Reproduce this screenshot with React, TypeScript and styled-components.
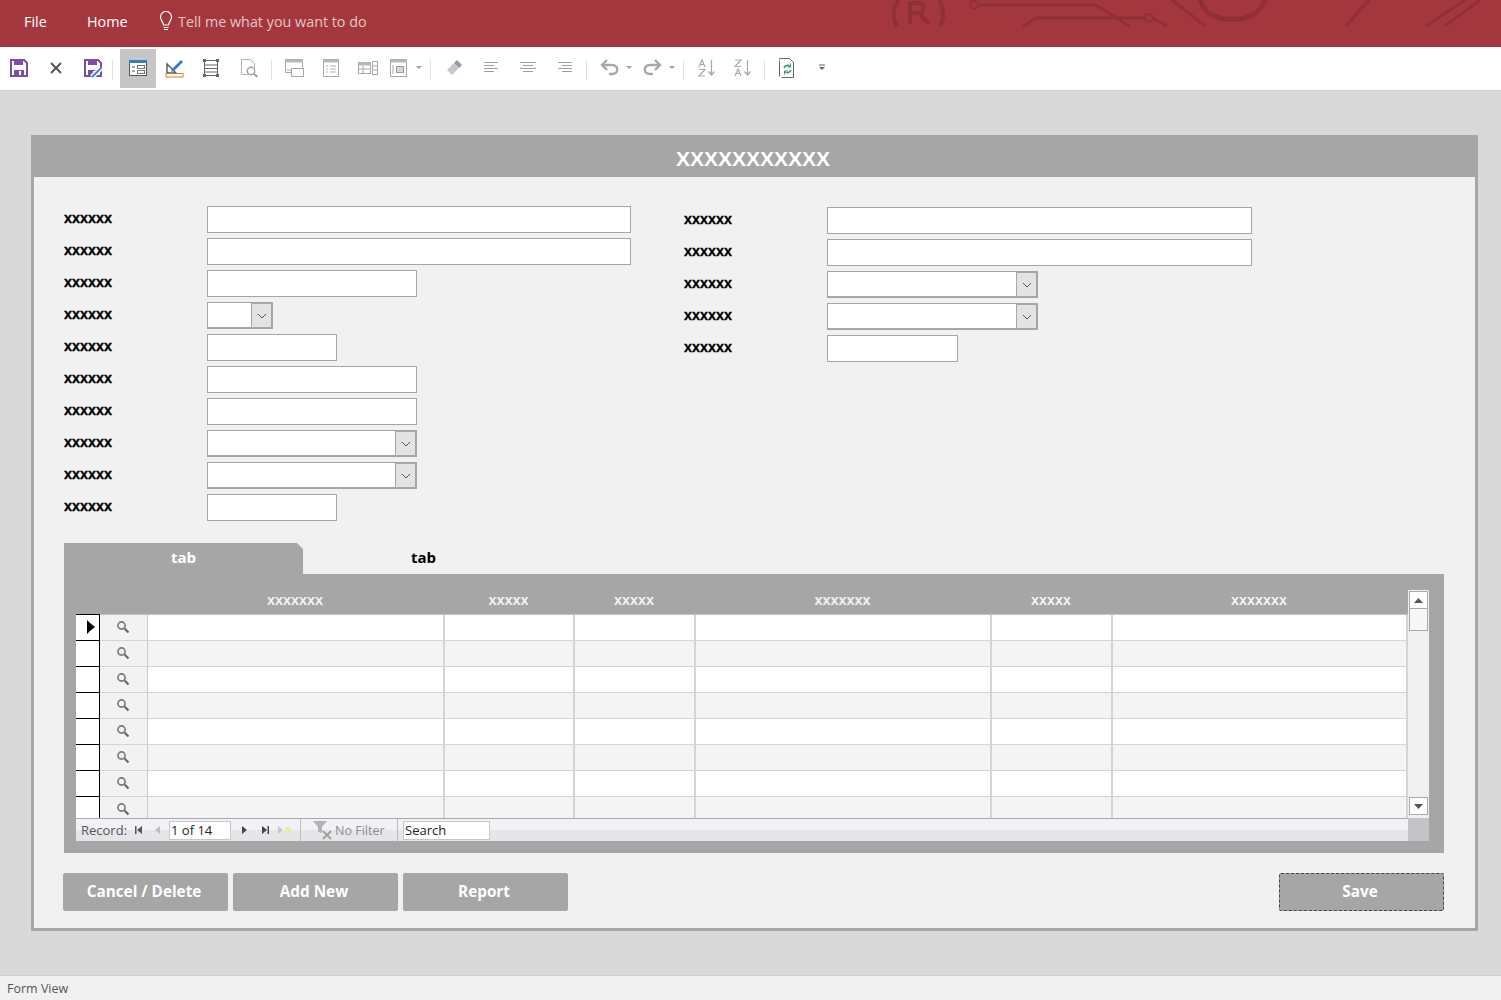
import React from "react";
import styled, { createGlobalStyle } from "styled-components";

const GlobalStyle = createGlobalStyle`
  html, body {
    margin: 0;
    padding: 0;
    background: #d9d9d9;
  }
  * {
    box-sizing: border-box;
  }
`;

const Page = styled.div`
  width: 1501px;
  height: 1000px;
  display: flex;
  flex-direction: column;
  overflow: hidden;
  font-family: "Open Sans", "Liberation Sans", sans-serif;
`;

const TitleBar = styled.div`
  position: relative;
  height: 47px;
  flex: none;
  display: flex;
  align-items: center;
  padding: 0 0 5px 24px;
  background: #a4373d;
  color: #fff;
  font-size: 14.35px;
  overflow: hidden;
`;

const Circuit = styled.svg`
  position: absolute;
  left: 860px;
  top: 0;
`;

const MenuItem = styled.span<{ $width: number }>`
  width: ${(p) => p.$width}px;
  flex: none;
`;

const TellMe = styled.span`
  display: flex;
  align-items: center;
  gap: 4px;
  color: #e3c6c8;
  margin-left: -2px;
`;

const Toolbar = styled.div`
  height: 44px;
  flex: none;
  display: flex;
  align-items: center;
  padding: 2px 0 0 0;
  background: #fff;
  border-bottom: 1px solid #d0d0d0;
`;

const ToolSlot = styled.div<{ $width: number; $active?: boolean }>`
  width: ${(p) => p.$width}px;
  height: 39px;
  flex: none;
  display: flex;
  align-items: center;
  justify-content: center;
  padding-bottom: 2px;
  margin-bottom: 2px;
  background: ${(p) => (p.$active ? "#c6c6c6" : "transparent")};
`;

const ToolSep = styled.div`
  width: 1px;
  height: 20px;
  flex: none;
  background: #e1e1e1;
`;

const Workspace = styled.div`
  flex: 1;
  padding: 44px 23px 44px 31px;
  background: #d9d9d9;
`;

const FormWindow = styled.div`
  height: 796px;
  display: flex;
  flex-direction: column;
  background: #f1f1f1;
  border: 3px solid #a6a6a6;
  border-top: 0;
`;

const FormHeader = styled.div`
  height: 42px;
  flex: none;
  margin: 0 -3px;
  display: flex;
  align-items: center;
  justify-content: center;
  padding: 5px 3px 0 0;
  background: #a6a6a6;
  color: #fff;
  font-family: "Liberation Sans", sans-serif;
  font-weight: 700;
  font-size: 21px;
`;

const FormBody = styled.div`
  flex: 1;
  display: flex;
  flex-direction: column;
  padding: 29px 31px 0 30px;
`;

const Fields = styled.div`
  height: 337px;
  flex: none;
  display: flex;
`;

const FieldColumn = styled.div<{ $width: number; $shift?: number }>`
  width: ${(p) => p.$width}px;
  flex: none;
  display: flex;
  flex-direction: column;
  gap: 5px;
  padding-top: ${(p) => p.$shift ?? 0}px;
`;

const FieldRow = styled.div`
  height: 27px;
  display: flex;
  align-items: center;
`;

const Label = styled.label`
  width: 143px;
  flex: none;
  color: #000;
  font-family: "Liberation Sans", sans-serif;
  font-weight: 700;
  font-size: 14.4px;
  -webkit-text-stroke: 0.3px #000;
  padding-bottom: 4px;
`;

const TextBox = styled.div<{ $width: number }>`
  width: ${(p) => p.$width}px;
  height: 27px;
  background: #fff;
  border: 1px solid #a6a6a6;
`;

const Combo = styled.div<{ $width: number }>`
  width: ${(p) => p.$width}px;
  height: 27px;
  display: flex;
  background: #fff;
  border: 1px solid #a6a6a6;
  border-right-width: 2px;
  border-bottom-width: 2px;
`;

const ComboValue = styled.div`
  flex: 1;
`;

const ComboButton = styled.div`
  width: 20px;
  flex: none;
  display: flex;
  align-items: center;
  justify-content: center;
  background: #e3e3e3;
  border-left: 1px solid #a6a6a6;
  border-top: 1px solid #a6a6a6;
`;

const TabStrip = styled.div`
  height: 31px;
  flex: none;
  display: flex;
`;

const Tab = styled.div<{ $active?: boolean }>`
  width: ${(p) => (p.$active ? 239 : 241)}px;
  display: flex;
  align-items: center;
  justify-content: center;
  padding-bottom: 3px;
  font-family: "Open Sans", sans-serif;
  font-weight: 700;
  font-size: 15px;
  color: ${(p) => (p.$active ? "#fff" : "#000")};
  background: ${(p) => (p.$active ? "#a6a6a6" : "transparent")};
  clip-path: ${(p) =>
    p.$active
      ? "polygon(0 0, calc(100% - 6px) 0, 100% 6px, 100% 100%, 0 100%)"
      : "none"};
`;

const TabPanel = styled.div`
  height: 279px;
  flex: none;
  display: flex;
  flex-direction: column;
  padding: 16px 15px 12px 12px;
  background: #a6a6a6;
`;

const GridWrap = styled.div`
  display: grid;
  grid-template-columns: 1332px 21px;
  grid-template-rows: 228px 23px;
  width: 1353px;
`;

const GridMain = styled.div`
  overflow: hidden;
`;

const GridHeader = styled.div`
  height: 25px;
  display: flex;
  border-bottom: 1px solid #c4c4c4;
`;

const HeadSpacer = styled.div`
  width: 72px;
  flex: none;
`;

const HeadCell = styled.div<{ $width: number }>`
  width: ${(p) => p.$width}px;
  flex: none;
  display: flex;
  align-items: center;
  justify-content: center;
  padding: 0 3px 5px 0;
  color: #f3f3f3;
  font-family: "Liberation Sans", sans-serif;
  font-weight: 700;
  font-size: 14.4px;
`;

const GridRow = styled.div<{ $odd: boolean }>`
  height: 26px;
  display: flex;
  background: ${(p) => (p.$odd ? "#f4f4f4" : "#fff")};
  border-bottom: 1px solid #d4d4d4;
`;

const Selector = styled.div<{ $first: boolean }>`
  width: 24px;
  flex: none;
  margin-top: ${(p) => (p.$first ? -1 : 0)}px;
  margin-bottom: -1px;
  display: flex;
  align-items: center;
  justify-content: flex-end;
  padding: 0 4px 2px 0;
  background: #fff;
  border-right: 1px solid #000;
  border-bottom: 1px solid #000;
  border-top: ${(p) => (p.$first ? "1px solid #000" : "0")};
`;

const LookupCell = styled.div`
  width: 48px;
  flex: none;
  display: flex;
  align-items: center;
  justify-content: center;
  padding: 0 2px 2px 0;
  background: #f2f2f2;
  border-right: 1px solid #c8c8c8;
`;

const DataCell = styled.div<{ $width: number }>`
  width: ${(p) => p.$width}px;
  flex: none;
  border-right: 2px solid #d4d4d4;
`;

const ScrollTrack = styled.div`
  grid-row: 1;
  grid-column: 2;
  display: flex;
  flex-direction: column;
  justify-content: space-between;
  padding: 1px 1px 3px;
  background: #f1f1f1;
`;

const ScrollTop = styled.div`
  display: flex;
  flex-direction: column;
`;

const ScrollButton = styled.div`
  height: 18px;
  display: flex;
  align-items: center;
  justify-content: center;
  background: #fff;
  border: 1px solid #a9a9a9;
`;

const ScrollThumb = styled.div`
  height: 22px;
  background: #f7f7f7;
  border: 1px solid #a9a9a9;
  border-top: 0;
`;

const NavBar = styled.div`
  grid-row: 2;
  grid-column: 1;
  display: flex;
  align-items: center;
  padding-left: 5px;
  font-size: 13px;
  color: #555;
  background: linear-gradient(#f2f2f6 0, #f2f2f6 50%, #e6e6ea 50%, #e6e6ea 100%);
  border-top: 1px solid #a9a9b0;
`;

const NavCorner = styled.div`
  grid-row: 2;
  grid-column: 2;
  background: #c3c3c8;
`;

const NavLabel = styled.span`
  width: 49px;
  flex: none;
`;

const NavIcon = styled.span<{ $width: number }>`
  width: ${(p) => p.$width}px;
  flex: none;
  display: flex;
  align-items: center;
  justify-content: center;
`;

const NavBox = styled.div<{ $width: number }>`
  width: ${(p) => p.$width}px;
  height: 19px;
  flex: none;
  display: flex;
  align-items: center;
  padding-left: 1px;
  color: #222;
  background: #fff;
  border: 1px solid #c8c8c8;
`;

const NavDivider = styled.div<{ $before: number; $after: number }>`
  width: 1px;
  height: 22px;
  flex: none;
  margin: 0 ${(p) => p.$after}px 0 ${(p) => p.$before}px;
  background: #bdbdc2;
`;

const NoFilter = styled.span`
  display: flex;
  align-items: center;
  width: 84px;
  flex: none;
  font-size: 12.5px;
  color: #8c8c8c;
`;

const Actions = styled.div`
  display: flex;
  gap: 5px;
  padding-top: 20px;
  margin-left: -1px;
`;

const ActionButton = styled.button<{ $focused?: boolean }>`
  width: 165px;
  height: 38px;
  padding: 0 3px 3px 0;
  display: flex;
  align-items: center;
  justify-content: center;
  font-family: "Open Sans", sans-serif;
  font-weight: 700;
  font-size: 15.3px;
  color: #fff;
  background: #a6a6a6;
  border: 1px ${(p) => (p.$focused ? "dashed #444" : "solid #a6a6a6")};
  border-radius: 2px;
  margin-left: ${(p) => (p.$focused ? "auto" : "0")};
`;

const StatusBar = styled.div`
  height: 25px;
  flex: none;
  display: flex;
  align-items: center;
  padding: 1px 0 0 7px;
  font-size: 12.5px;
  color: #555;
  background: #f1f1f1;
  border-top: 1px solid #cfcfcf;
`;

const Gl = ({ w, h, children }: { w: number; h: number; children: React.ReactNode }) => (
  <svg width={w} height={h} viewBox={`0 0 ${w} ${h}`} fill="none">
    {children}
  </svg>
);

const SaveIcon = ({ pen }: { pen?: boolean }) => (
  <Gl w={20} h={20}>
    <path d="M2 2h13l3 3v13H2z" fill="#fff" stroke="#7d4ea8" strokeWidth="2" />
    <rect x="5" y="2" width="9" height="5" fill="#7d4ea8" />
    <rect x="5" y="12" width="10" height="6" fill="#7d4ea8" />
    <rect x="10" y="13" width="2" height="4" fill="#fff" />
    {pen && <path d="M9 19l9-9" stroke="#fff" strokeWidth="5" />}
    {pen && <path d="M9 19l9-9" stroke="#3f86c9" strokeWidth="2" />}
  </Gl>
);

const GreyDoc = ({ children }: { children: React.ReactNode }) => (
  <Gl w={20} h={20}>
    <rect x="2.5" y="1.5" width="15" height="17" fill="#fff" stroke="#a8a8a8" />
    <rect x="2.5" y="1.5" width="15" height="3" fill="#b8b8b8" />
    {children}
  </Gl>
);

const AlignIcon = ({ lines }: { lines: [number, number][] }) => (
  <Gl w={18} h={14}>
    {lines.map(([a, b], i) => (
      <path key={i} d={`M${a} ${1.5 + i * 3}H${b}`} stroke="#a0a0a0" />
    ))}
  </Gl>
);

const SortIcon = ({ top, bottom }: { top: string; bottom: string }) => (
  <Gl w={20} h={20}>
    <path d={top} stroke="#a8a8a8" strokeWidth="1.2" />
    <path d={bottom} stroke="#a8a8a8" strokeWidth="1.2" />
    <path d="M14.5 2v15M11.5 13.5l3 3.5 3-3.5" stroke="#a8a8a8" strokeWidth="1.2" />
  </Gl>
);

const LETTER_A_TOP = "M2 9l3-7 3 7M3 6.5h4";
const LETTER_Z_BOTTOM = "M2 11.5h6l-6 6.5h6";
const LETTER_Z_TOP = "M2 2h6L2 8.5h6";
const LETTER_A_BOTTOM = "M2 18l3-7 3 7M3 15.5h4";

const SmallCaret = () => (
  <Gl w={6} h={4}>
    <path d="M0 0h6L3 3z" fill="#a0a0a0" />
  </Gl>
);

const Chevron = () => (
  <Gl w={10} h={6}>
    <path d="M1 1l4 4 4-4" stroke="#555" />
  </Gl>
);

const Lens = () => (
  <Gl w={14} h={14}>
    <circle cx="5.5" cy="5.5" r="3.6" stroke="#777" strokeWidth="1.6" />
    <path d="M8.5 8.5l4 4" stroke="#666" strokeWidth="2.2" />
  </Gl>
);

const Filled = ({ d, w, h, color }: { d: string; w: number; h: number; color: string }) => (
  <Gl w={w} h={h}>
    <path d={d} fill={color} />
  </Gl>
);

const columns = [297, 130, 121, 296, 121, 295];
const headers = ["xxxxxxx", "xxxxx", "xxxxx", "xxxxxxx", "xxxxx", "xxxxxxx"];
const rows = [0, 1, 2, 3, 4, 5, 6, 7];

type Field = { width: number; combo?: boolean };

const leftFields: Field[] = [
  { width: 424 },
  { width: 424 },
  { width: 210 },
  { width: 66, combo: true },
  { width: 130 },
  { width: 210 },
  { width: 210 },
  { width: 210, combo: true },
  { width: 210, combo: true },
  { width: 130 },
];

const rightFields: Field[] = [
  { width: 425 },
  { width: 425 },
  { width: 211, combo: true },
  { width: 211, combo: true },
  { width: 131 },
];

const renderField = (f: Field, i: number) => (
  <FieldRow key={i}>
    <Label>xxxxxx</Label>
    {f.combo ? (
      <Combo $width={f.width}>
        <ComboValue />
        <ComboButton>
          <Chevron />
        </ComboButton>
      </Combo>
    ) : (
      <TextBox $width={f.width} />
    )}
  </FieldRow>
);

const App = () => {
  return (
    <Page>
      <GlobalStyle />
      <TitleBar>
        <Circuit width="641" height="47" viewBox="0 0 641 47" fill="none" stroke="#8f3036" strokeWidth="3">
          <path d="M38 0c-5 8-6 18-1 26M79 0c5 8 6 18 1 26" strokeWidth="4" />
          <path d="M50 24V3h9c6 0 6 10 0 10h-9M59 13l10 11" strokeWidth="4" />
          <circle cx="114" cy="5" r="4" strokeWidth="2" />
          <path d="M118 5h118l34 22" />
          <path d="M163 27l12-9h110" />
          <circle cx="289" cy="18" r="4" strokeWidth="2" />
          <path d="M293 18l14 8" />
          <path d="M312 0l33 26" />
          <path d="M340 0c6 26 58 26 65 0" strokeWidth="5" />
          <path d="M509 0l-23 26M605 0l-39 26M620 0l-35 26" />
        </Circuit>
        <MenuItem $width={63}>File</MenuItem>
        <MenuItem $width={73}>Home</MenuItem>
        <TellMe>
          <Gl w={16} h={20}>
            <path
              d="M5.5 14c0-3-3-4-3-8a5.5 5.5 0 0 1 11 0c0 4-3 5-3 8z"
              stroke="#fff"
              strokeWidth="1.2"
            />
            <path d="M5.5 16.5h5M6 18.5h4" stroke="#fff" strokeWidth="1.2" />
          </Gl>
          Tell me what you want to do
        </TellMe>
      </TitleBar>

      <Toolbar>
        <ToolSlot $width={38}>
          <SaveIcon />
        </ToolSlot>
        <ToolSlot $width={36}>
          <Gl w={12} h={12}>
            <path d="M1 1l10 10M11 1L1 11" stroke="#555" strokeWidth="2" />
          </Gl>
        </ToolSlot>
        <ToolSlot $width={38}>
          <SaveIcon pen />
        </ToolSlot>
        <ToolSep />
        <ToolSlot $width={7} />
        <ToolSlot $width={36} $active>
          <Gl w={20} h={18}>
            <rect x="1.5" y="1.5" width="17" height="15" fill="#fff" stroke="#555" />
            <rect x="1" y="1" width="18" height="3" fill="#2f7fc4" />
            <path d="M4 8h3M4 12h3" stroke="#555" />
            <rect x="9.5" y="6.5" width="7" height="3" stroke="#777" />
            <rect x="9.5" y="11.5" width="7" height="3" stroke="#777" />
          </Gl>
        </ToolSlot>
        <ToolSlot $width={37}>
          <Gl w={20} h={20}>
            <path d="M2 15V6l9 9z" stroke="#555" strokeWidth="1.4" />
            <path d="M7 11l9-9 2 2-9 9-3 1z" fill="#2f7fc4" />
            <rect x="1" y="15.5" width="17" height="3.5" fill="#fff" stroke="#e07b1f" />
          </Gl>
        </ToolSlot>
        <ToolSlot $width={36}>
          <Gl w={18} h={20}>
            <rect x="2.5" y="2.5" width="13" height="15" stroke="#666" />
            <path d="M3 7h12M3 10.5h12M3 14h12" stroke="#666" />
            <path d="M1 1h3v3H1zM14 1h3v3h-3zM1 16h3v3H1zM14 16h3v3h-3z" fill="#666" />
          </Gl>
        </ToolSlot>
        <ToolSlot $width={39}>
          <Gl w={20} h={20}>
            <path d="M2.5 1.5h9l4 4v5M2.5 1.5v15h7" stroke="#b0b0b0" />
            <circle cx="12" cy="13" r="3.7" stroke="#a0a0a0" strokeWidth="1.4" />
            <path d="M15 16l3.5 3" stroke="#a0a0a0" strokeWidth="1.8" />
          </Gl>
        </ToolSlot>
        <ToolSlot $width={3} />
        <ToolSep />
        <ToolSlot $width={3} />
        <ToolSlot $width={37}>
          <Gl w={20} h={20}>
            <rect x="1.5" y="1.5" width="17" height="13" fill="#fff" stroke="#a8a8a8" />
            <rect x="1.5" y="1.5" width="17" height="3" fill="#b8b8b8" />
            <rect x="7.5" y="10.5" width="12" height="8" fill="#fff" stroke="#a8a8a8" />
            <path d="M3 12h4" stroke="#a8a8a8" />
          </Gl>
        </ToolSlot>
        <ToolSlot $width={37}>
          <GreyDoc>
            <path d="M5 8h2M9 8h6M5 11h2M9 11h6M5 14h2M9 14h6" stroke="#b0b0b0" />
          </GreyDoc>
        </ToolSlot>
        <ToolSlot $width={37}>
          <Gl w={20} h={14}>
            <rect x="0.5" y="1.5" width="12" height="11" fill="#fff" stroke="#a8a8a8" />
            <rect x="0.5" y="1.5" width="12" height="3" fill="#b8b8b8" />
            <path d="M0 8h12M5 5v7" stroke="#a8a8a8" />
            <rect x="14.5" y="0.5" width="5" height="13" stroke="#a8a8a8" />
            <path d="M15 5h4M15 9h4" stroke="#a8a8a8" />
          </Gl>
        </ToolSlot>
        <ToolSlot $width={26}>
          <Gl w={20} h={20}>
            <rect x="1.5" y="1.5" width="16" height="17" fill="#fff" stroke="#a8a8a8" />
            <rect x="1.5" y="1.5" width="16" height="3" fill="#b8b8b8" />
            <rect x="7.5" y="8.5" width="7" height="6" fill="#d8d8d8" stroke="#999" />
            <path d="M4 7v9" stroke="#a8a8a8" />
          </Gl>
        </ToolSlot>
        <ToolSlot $width={13}>
          <SmallCaret />
        </ToolSlot>
        <ToolSlot $width={5} />
        <ToolSep />
        <ToolSlot $width={4} />
        <ToolSlot $width={37}>
          <Gl w={20} h={18}>
            <path d="M3 11l7-7 5 5-7 7z" fill="#c9c4cf" />
            <path d="M10 4l3-3 5 5-3 3z" fill="#9a9a9a" />
          </Gl>
        </ToolSlot>
        <ToolSlot $width={37}>
          <AlignIcon lines={[[2, 16], [2, 12], [2, 16], [2, 12]]} />
        </ToolSlot>
        <ToolSlot $width={37}>
          <AlignIcon lines={[[1, 17], [4, 14], [1, 17], [4, 14]]} />
        </ToolSlot>
        <ToolSlot $width={37}>
          <AlignIcon lines={[[2, 16], [6, 16], [2, 16], [6, 16]]} />
        </ToolSlot>
        <ToolSlot $width={3} />
        <ToolSep />
        <ToolSlot $width={9} />
        <ToolSlot $width={28}>
          <Gl w={20} h={17}>
            <path d="M7 1L2 6l5 5" stroke="#a8a8a8" strokeWidth="2.4" />
            <path d="M3 6h9c7 0 7 9 0 9H9" stroke="#a8a8a8" strokeWidth="2.4" />
          </Gl>
        </ToolSlot>
        <ToolSlot $width={9}>
          <SmallCaret />
        </ToolSlot>
        <ToolSlot $width={5} />
        <ToolSlot $width={28}>
          <Gl w={20} h={17}>
            <path d="M13 1l5 5-5 5" stroke="#a8a8a8" strokeWidth="2.4" />
            <path d="M17 6H8c-7 0-7 9 0 9h3" stroke="#a8a8a8" strokeWidth="2.4" />
          </Gl>
        </ToolSlot>
        <ToolSlot $width={12}>
          <SmallCaret />
        </ToolSlot>
        <ToolSlot $width={5} />
        <ToolSep />
        <ToolSlot $width={4} />
        <ToolSlot $width={37}>
          <SortIcon top={LETTER_A_TOP} bottom={LETTER_Z_BOTTOM} />
        </ToolSlot>
        <ToolSlot $width={36}>
          <SortIcon top={LETTER_Z_TOP} bottom={LETTER_A_BOTTOM} />
        </ToolSlot>
        <ToolSlot $width={3} />
        <ToolSep />
        <ToolSlot $width={3} />
        <ToolSlot $width={37}>
          <Gl w={18} h={22}>
            <path d="M1.5 1.5v18" stroke="#666" />
            <path d="M1.5 1.5h10l4 4v15h-12" fill="#fff" stroke="#666" />
            <path d="M6 11a3.5 3.5 0 0 1 6-1.5M13 13a3.5 3.5 0 0 1-6 1.5" stroke="#3d9a76" strokeWidth="1.6" />
            <path d="M12.5 6.5v3.5H9M6.5 17.5V14H10" stroke="#3d9a76" />
          </Gl>
        </ToolSlot>
        <ToolSlot $width={33}>
          <Gl w={6} h={7}>
            <path d="M0 1h6" stroke="#666" />
            <path d="M0 3h6L3 6z" fill="#666" />
          </Gl>
        </ToolSlot>
      </Toolbar>

      <Workspace>
        <FormWindow>
          <FormHeader>XXXXXXXXXXX</FormHeader>
          <FormBody>
            <Fields>
              <FieldColumn $width={620}>{leftFields.map(renderField)}</FieldColumn>
              <FieldColumn $width={600} $shift={1}>
                {rightFields.map(renderField)}
              </FieldColumn>
            </Fields>

            <TabStrip>
              <Tab $active>tab</Tab>
              <Tab>tab</Tab>
            </TabStrip>
            <TabPanel>
              <GridWrap>
                <GridMain>
                  <GridHeader>
                    <HeadSpacer />
                    {columns.map((w, i) => (
                      <HeadCell key={i} $width={w}>
                        {headers[i]}
                      </HeadCell>
                    ))}
                  </GridHeader>
                  {rows.map((r) => (
                    <GridRow key={r} $odd={r % 2 === 1}>
                      <Selector $first={r === 0}>
                        {r === 0 && <Filled w={8} h={14} d="M0 0l3 3 5 4-5 4-3 3z" color="#000" />}
                      </Selector>
                      <LookupCell>
                        <Lens />
                      </LookupCell>
                      {columns.map((w, i) => (
                        <DataCell key={i} $width={w} />
                      ))}
                    </GridRow>
                  ))}
                </GridMain>
                <ScrollTrack>
                  <ScrollTop>
                    <ScrollButton>
                      <Filled w={9} h={5} d="M0 5l4.5-5L9 5z" color="#555" />
                    </ScrollButton>
                    <ScrollThumb />
                  </ScrollTop>
                  <ScrollButton>
                    <Filled w={9} h={5} d="M0 0l4.5 5L9 0z" color="#555" />
                  </ScrollButton>
                </ScrollTrack>
                <NavBar>
                  <NavLabel>Record:</NavLabel>
                  <NavIcon $width={16}>
                    <Filled w={7} h={8} d="M0 0h1.5v8H0zM7 0v8L2 4z" color="#555" />
                  </NavIcon>
                  <NavIcon $width={23}>
                    <Filled w={5} h={8} d="M5 0v8L0 4z" color="#bdbdbd" />
                  </NavIcon>
                  <NavBox $width={62}>1 of 14</NavBox>
                  <NavIcon $width={26}>
                    <Filled w={5} h={8} d="M0 0v8l5-4z" color="#444" />
                  </NavIcon>
                  <NavIcon $width={16}>
                    <Filled w={7} h={8} d="M7 0H5.5v8H7zM0 0v8l5-4z" color="#444" />
                  </NavIcon>
                  <NavIcon $width={24}>
                    <Gl w={14} h={8}>
                      <path d="M0 0v8l5-4z" fill="#c8c8c8" />
                      <rect x="7" y="1" width="6" height="6" fill="#f3e7a8" />
                    </Gl>
                  </NavIcon>
                  <NavDivider $before={3} $after={12} />
                  <NoFilter>
                    <Gl w={22} h={20}>
                      <path d="M0 1h14L9 7v6l-4-1V7z" fill="#b4b4b4" />
                      <path d="M10 11l8 8M18 11l-8 8" stroke="#a0a0a0" strokeWidth="2" />
                    </Gl>
                    No Filter
                  </NoFilter>
                  <NavDivider $before={0} $after={5} />
                  <NavBox $width={87}>Search</NavBox>
                </NavBar>
                <NavCorner />
              </GridWrap>
            </TabPanel>
            <Actions>
              <ActionButton>Cancel / Delete</ActionButton>
              <ActionButton>Add New</ActionButton>
              <ActionButton>Report</ActionButton>
              <ActionButton $focused>Save</ActionButton>
            </Actions>
          </FormBody>
        </FormWindow>
      </Workspace>

      <StatusBar>Form View</StatusBar>
    </Page>
  );
};

export default App;
